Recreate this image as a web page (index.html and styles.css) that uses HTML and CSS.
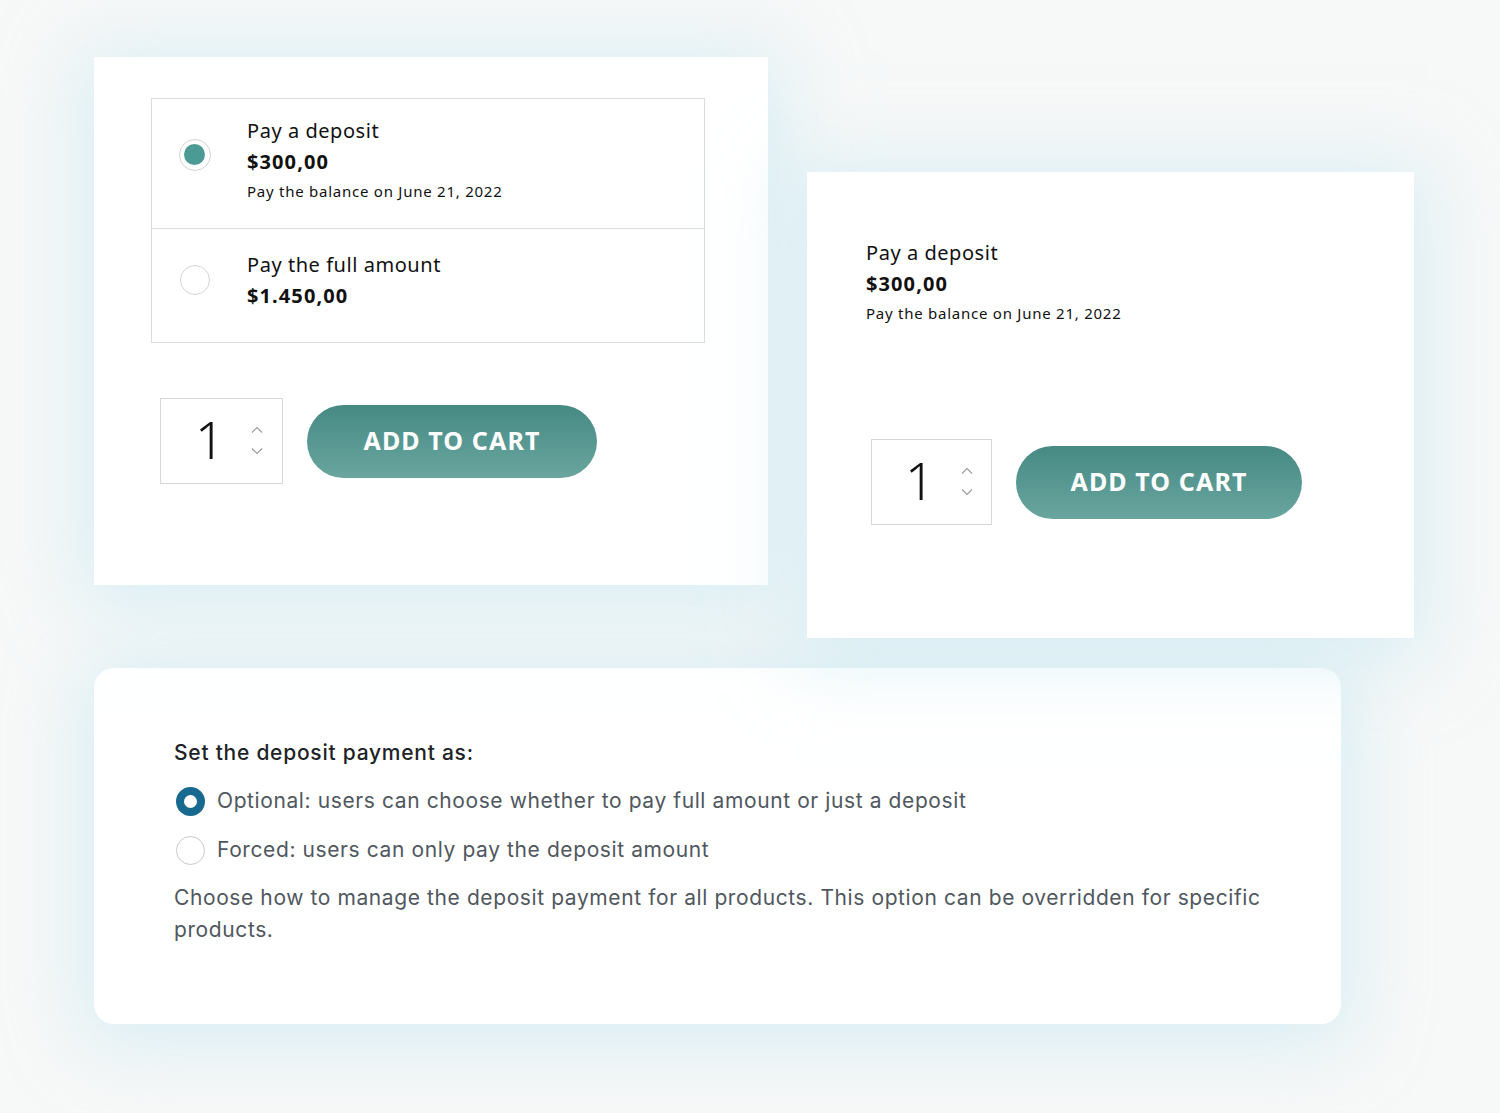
FILE: index.html
```html
<!DOCTYPE html>
<html lang="en">
<head>
<meta charset="utf-8">
<title>Deposits</title>
<link rel="stylesheet" href="styles.css">
</head>
<body>
<main class="page">
  <div class="row">
    <section class="card card-a">
      <div class="options">
        <div class="option">
          <span class="radio radio-on"></span>
          <div class="opt-text">
            <div class="opt-title">Pay a deposit</div>
            <div class="opt-price">$300,00</div>
            <div class="opt-note">Pay the balance on June 21, 2022</div>
          </div>
        </div>
        <div class="option option-2">
          <span class="radio"></span>
          <div class="opt-text">
            <div class="opt-title">Pay the full amount</div>
            <div class="opt-price">$1.450,00</div>
          </div>
        </div>
      </div>
      <div class="buy">
        <div class="qty">
          <span class="qty-num">1</span>
          <span class="spin">
            <svg width="12" height="8" viewBox="0 0 12 8"><path d="M1 6.5 6 1.5 11 6.5" fill="none" stroke="#9a9a9a" stroke-width="1.1"/></svg>
            <svg width="12" height="8" viewBox="0 0 12 8"><path d="M1 1.5 6 6.5 11 1.5" fill="none" stroke="#9a9a9a" stroke-width="1.1"/></svg>
          </span>
        </div>
        <button class="cart">ADD TO CART</button>
      </div>
    </section>

    <section class="card card-b">
      <div class="opt-text">
        <div class="opt-title">Pay a deposit</div>
        <div class="opt-price">$300,00</div>
        <div class="opt-note">Pay the balance on June 21, 2022</div>
      </div>
      <div class="buy buy-b">
        <div class="qty">
          <span class="qty-num">1</span>
          <span class="spin">
            <svg width="12" height="8" viewBox="0 0 12 8"><path d="M1 6.5 6 1.5 11 6.5" fill="none" stroke="#9a9a9a" stroke-width="1.1"/></svg>
            <svg width="12" height="8" viewBox="0 0 12 8"><path d="M1 1.5 6 6.5 11 1.5" fill="none" stroke="#9a9a9a" stroke-width="1.1"/></svg>
          </span>
        </div>
        <button class="cart">ADD TO CART</button>
      </div>
    </section>
  </div>

  <section class="card card-c">
    <h2 class="set-title">Set the deposit payment as:</h2>
    <label class="wp-opt"><span class="wp-radio wp-radio-on"></span>Optional: users can choose whether to pay full amount or just a deposit</label>
    <label class="wp-opt"><span class="wp-radio"></span>Forced: users can only pay the deposit amount</label>
    <p class="desc">Choose how to manage the deposit payment for all products. This option can be overridden for specific products.</p>
  </section>
</main>
</body>
</html>
```

FILE: styles.css
```css
* { box-sizing: border-box; }
html, body { margin: 0; padding: 0; }
body {
  width: 1500px;
  height: 1113px;
  overflow: hidden;
  background: #f7f8f8;
  font-family: "Noto Sans", "DejaVu Sans", sans-serif;
  color: #111;
}
.page {
  padding: 57px 0 0 94px;
}
.row {
  display: flex;
  align-items: flex-start;
  gap: 39px;
}
.card {
  background: #fff;
  box-shadow: 0 8px 70px 14px rgba(198, 232, 242, 0.6);
}
.card-a {
  width: 674px;
  height: 528px;
  padding: 41px 63px 0 57px;
}
.options {
  border: 1px solid #dcdcdc;
}
.option {
  display: flex;
  align-items: flex-start;
  height: 129px;
  padding: 17px 0 0 27px;
}
.option-2 {
  border-top: 1px solid #dcdcdc;
  height: 114px;
  padding-top: 21px;
}
.radio {
  width: 32px;
  height: 32px;
  border-radius: 50%;
  border: 1.5px solid #d4d4d4;
  flex: none;
  margin-top: 23px;
  margin-right: 36px;
  position: relative;
  background: #fff;
}
.option-2 .radio { margin-top: 15px; width: 30px; height: 30px; margin-left: 1px; margin-right: 37px; }
.radio-on::after {
  content: "";
  position: absolute;
  left: 4px;
  top: 4px;
  width: 21px;
  height: 21px;
  border-radius: 50%;
  background: #4b9a93;
}
.opt-title {
  font-size: 20px;
  line-height: 30px;
  color: #111;
  letter-spacing: 0.55px;
}
.opt-price {
  font-size: 20px;
  font-weight: 700;
  line-height: 32px;
  color: #111;
  letter-spacing: 1.1px;
}
.opt-note {
  font-size: 15px;
  line-height: 26px;
  color: #111;
  letter-spacing: 0.75px;
}
.buy {
  display: flex;
  align-items: flex-start;
  margin-top: 55px;
  margin-left: 9px;
}
.qty {
  width: 123px;
  height: 86px;
  border: 1.5px solid #d8d8d8;
  display: flex;
  align-items: center;
  padding-left: 34px;
}
.qty-num {
  font-size: 52px;
  font-weight: 300;
  color: #111;
  width: 56px;
  line-height: 1;
  margin-top: -4px;
}
.spin {
  display: flex;
  flex-direction: column;
  gap: 13px;
  margin-top: -2px;
}
.cart {
  margin-left: 24px;
  margin-top: 7px;
  width: 290px;
  height: 73px;
  border: none;
  border-radius: 37px;
  background: linear-gradient(180deg, #468a84 0%, #6aa59f 100%);
  color: #fff;
  font-family: "Noto Sans", "DejaVu Sans", sans-serif;
  font-weight: 700;
  font-size: 25px;
  letter-spacing: 1.1px;
  padding: 0 0 3px 0;
}
.card-b {
  width: 607px;
  height: 466px;
  margin-top: 115px;
  padding: 66px 0 0 59px;
}
.buy-b {
  margin-top: 113px;
  margin-left: 5px;
}
.buy-b .qty { width: 121px; height: 86px; padding-left: 33px; }
.buy-b .cart { width: 286px; margin-top: 7px; }
.card-c {
  width: 1247px;
  height: 356px;
  margin-top: 30px;
  border-radius: 20px;
  padding: 69px 80px 0 80px;
  font-family: Inter, "Noto Sans", sans-serif;
  color: #50575e;
}
.set-title {
  margin: 0 0 16px;
  font-size: 21px;
  font-weight: 500;
  color: #1d2327;
  letter-spacing: 0.75px;
  line-height: 32px;
}
.wp-opt {
  display: flex;
  align-items: center;
  font-size: 21px;
  line-height: 32px;
  letter-spacing: 0.6px;
  color: #50575e;
  margin-bottom: 17px;
}
.wp-radio {
  width: 29px;
  height: 29px;
  border-radius: 50%;
  border: 1.5px solid #c9c9c9;
  margin-right: 12px;
  margin-left: 2px;
  flex: none;
  position: relative;
}
.wp-radio-on {
  border: 8px solid #18698f;
  background: #fff;
}
.desc {
  margin: -1px 0 0;
  font-size: 21px;
  line-height: 32px;
  letter-spacing: 0.6px;
  color: #50575e;
}
```
